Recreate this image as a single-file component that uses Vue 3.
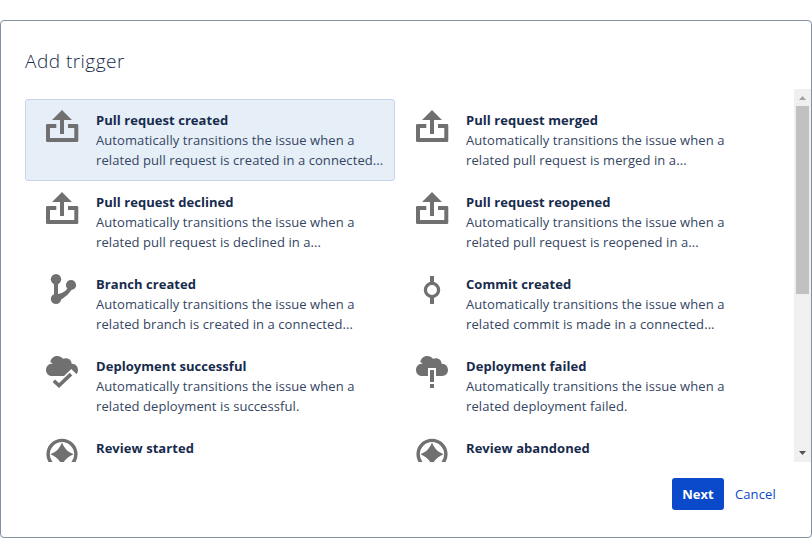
<script setup>
const lead = 'Automatically transitions the issue when a'
const triggers = [
  { icon: 'pull', title: 'Pull request created', text: 'related pull request is created in a connected...', selected: true },
  { icon: 'pull', title: 'Pull request merged', text: 'related pull request is merged in a...' },
  { icon: 'pull', title: 'Pull request declined', text: 'related pull request is declined in a...' },
  { icon: 'pull', title: 'Pull request reopened', text: 'related pull request is reopened in a...' },
  { icon: 'branch', title: 'Branch created', text: 'related branch is created in a connected...' },
  { icon: 'commit', title: 'Commit created', text: 'related commit is made in a connected...' },
  { icon: 'success', title: 'Deployment successful', text: 'related deployment is successful.' },
  { icon: 'failed', title: 'Deployment failed', text: 'related deployment failed.' },
  { icon: 'review', title: 'Review started', text: '' },
  { icon: 'review', title: 'Review abandoned', text: '' },
]
</script>

<template>
  <section class="dialog">
    <h2>Add trigger</h2>
    <div class="body">
      <ul class="list">
        <li v-for="t in triggers" :key="t.title" class="item" :class="{ selected: t.selected }">
          <svg class="icon" width="33" height="32" viewBox="0 0 33 32">
            <template v-if="t.icon === 'pull'">
              <path d="M16 0L26 10H18V24H14V10H6Z" />
              <path d="M1.3 14H10.3V18H4V28H28.3V18H22V14H31Q32.3 14 32.3 15.3V30.7Q32.3 32 31 32H1.3Q0 32 0 30.7V15.3Q0 14 1.3 14Z" />
            </template>
            <template v-else-if="t.icon === 'branch'">
              <circle cx="10" cy="5.2" r="5.2" /><circle cx="25" cy="11" r="5.1" /><circle cx="10" cy="24.9" r="5.2" />
              <path d="M8 5H12V20Q20.5 18.5 22.5 12L27 12.5Q23.5 22.5 10 28H8Z" />
            </template>
            <template v-else-if="t.icon === 'commit'">
              <circle class="line" cx="16" cy="14" r="6.6" stroke-width="3.3" />
              <path d="M14 0H18V7H14ZM14 21H18V28H14Z" />
            </template>
            <template v-else-if="t.icon === 'success' || t.icon === 'failed'">
              <path d="M4.3 6.2C5 2.3 7.7 0 11 0C13.7 0 15.8 1.1 17 2.8C21 .9 25.6 3.3 25.6 7.7C29.5 7.5 32 10.5 32 14.1C32 17.5 29.7 20 26 20H6C2.3 20 0 17.3 0 14C0 10.4 2.7 7.5 6.8 7.5C6.2 6.7 5.3 6.3 4.3 6.2Z" />
              <template v-if="t.icon === 'success'">
                <path class="gap" d="M13 24.7L25.3 13L32 19.7V32H5V24L8.5 20.2Z" />
                <path class="line" d="M7.8 24.7L13 29.6L25 18.1" stroke-width="3.6" />
              </template>
              <template v-else>
                <path class="gap" d="M12 12H20V32H12Z" />
                <path d="M14 14H18V26H14ZM14 28H18V32H14Z" />
              </template>
            </template>
            <template v-else>
              <circle class="line" cx="16" cy="16.3" r="13.9" stroke-width="3.4" />
              <path d="M16 4.4Q19 13 27.6 16.2Q19 19.4 16 28Q13 19.4 4.4 16.2Q13 13 16 4.4Z" />
            </template>
          </svg>
          <div class="copy">
            <h3>{{ t.title }}</h3>
            <p v-if="t.text">{{ lead }}<br>{{ t.text }}</p>
          </div>
        </li>
      </ul>
      <div class="scrollbar">
        <svg width="17" height="17" viewBox="0 0 17 17"><path fill="#a3a3a3" d="M5 11L8.5 7L12 11Z" /></svg>
        <div class="thumb"></div>
        <svg class="down" width="17" height="17" viewBox="0 0 17 17"><path fill="#505050" d="M5 6H12L8.5 10Z" /></svg>
      </div>
    </div>
    <footer>
      <button class="next">Next</button>
      <a class="cancel">Cancel</a>
    </footer>
  </section>
</template>

<style>
body { background: #fff; }
</style>

<style scoped>
.dialog {
  box-sizing: border-box;
  width: 812px;
  height: 518px;
  margin-top: 20px;
  border: 1px solid #8590a2;
  border-radius: 4px;
  background: #fff;
  color: #172b4d;
  font-family: "Open Sans", "Noto Sans", sans-serif;
  font-size: 13px;
  line-height: 20px;
  display: flex;
  flex-direction: column;
}
h2 {
  margin: 0;
  padding: 26px 24px 14px;
  height: 28px;
  font-size: 19px;
  line-height: 28px;
  font-weight: 300;
  letter-spacing: 0.48px;
}
.body { display: flex; height: 373px; justify-content: space-between; }
.list {
  list-style: none;
  margin: 0;
  padding: 10px 0 0 24px;
  display: grid;
  grid-template-columns: 370px 370px;
  grid-auto-rows: 82px;
  overflow: hidden;
}
.item {
  box-sizing: border-box;
  display: flex;
  gap: 17px;
  padding: 10px 0 10px 20px;
  border: 1px solid transparent;
  border-radius: 3px;
}
.selected { background: #e6eef8; border-color: #c5d4ea; }
.icon { flex: none; fill: #707070; overflow: visible; }
.icon:has(circle[cy="14"]) { margin-top: 2px; }
.line { fill: none; stroke: #707070; }
.gap { fill: #fff; }
h3 { margin: 0; font-size: 13px; line-height: 20px; font-weight: 700; white-space: nowrap; letter-spacing: 0.05px; }
p { margin: 0; white-space: nowrap; color: #344563; letter-spacing: 0.08px; }
.scrollbar {
  width: 17px;
  background: #f0f0f0;
  display: flex;
  flex-direction: column;
  align-items: center;
}
.scrollbar svg { display: block; flex: none; }
.thumb { width: 13px; height: 188px; background: #c1c1c1; }
.down { margin-top: auto; }
footer { display: flex; justify-content: flex-end; align-items: center; gap: 11px; padding: 16px 35px 0 0; }
.next {
  width: 52px;
  height: 32px;
  padding: 0;
  border: 0;
  border-radius: 3px;
  background: #0a49c9;
  color: #fff;
  font: 700 13px/20px "Open Sans", sans-serif;
}
.cancel { color: #0a49c9; letter-spacing: 0.15px; }
</style>
